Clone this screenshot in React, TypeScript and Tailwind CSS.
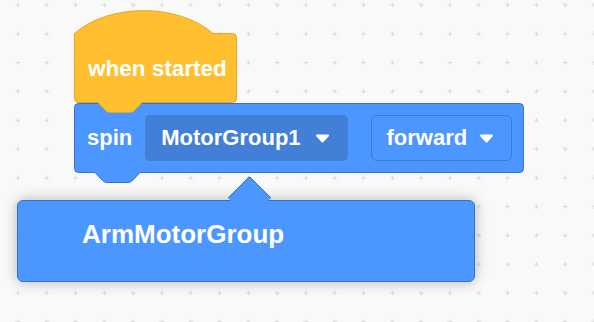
import React from "react";

function Caret() {
  return (
    <svg width="15" height="9" viewBox="0 0 15 9" className="shrink-0">
      <path d="M2 1.5 H13 L7.5 7.5 Z" fill="#fff" stroke="#fff" strokeWidth="2" strokeLinejoin="round" />
    </svg>
  );
}

export default function App() {
  const font = { fontFamily: '"Liberation Sans", Arial, Helvetica, sans-serif' };
  return (
    <div className="relative w-[594px] h-[322px] overflow-hidden bg-[#f9f9f9]" style={font}>
      {/* workspace grid */}
      <svg className="absolute inset-0" width="594" height="322">
        <defs>
          <pattern id="grid" x="3.6" y="-9.4" width="28.8" height="28.8" patternUnits="userSpaceOnUse">
            <path d="M12.2 14.4 H16.6 M14.4 12.2 V16.6" stroke="#d8d8d8" strokeWidth="1" />
          </pattern>
        </defs>
        <rect width="594" height="322" fill="url(#grid)" />
      </svg>

      {/* spin block */}
      <div className="absolute left-[74px] top-[103px] w-[450px] h-[70px]">
        <svg className="absolute left-0 top-0 overflow-visible" width="450" height="81">
          <path
            d="M0.5,4.5 Q0.5,0.5 4.5,0.5 L445.5,0.5 Q449.5,0.5 449.5,4.5 L449.5,65.5 Q449.5,69.5 445.5,69.5 L66,69.5 L58.5,77.5 Q56.5,79.5 54,79.5 L33,79.5 Q30.5,79.5 28.5,77.5 L21,69.5 L4.5,69.5 Q0.5,69.5 0.5,65.5 Z"
            fill="#4c97ff"
            stroke="#3373cc"
            strokeWidth="1"
          />
        </svg>
        <div className="relative flex items-center h-full pl-[13px] pr-[12px] pb-[1px] text-white font-bold text-[22px] leading-[26px]">
          <span>spin</span>
          <div className="ml-[13px] flex items-center h-[46px] w-[203px] rounded-[5px] bg-[#4280d7] pl-[16px]">
            <span>MotorGroup1</span>
            <span className="ml-[14px] mt-[1px]"><Caret /></span>
          </div>
          <div className="ml-[23px] flex items-center h-[46px] w-[142px] rounded-[6px] border border-[#3d7ad0] bg-[#4c97ff] pl-[15px]">
            <span>forward</span>
            <span className="ml-[12px] mt-[1px]"><Caret /></span>
          </div>
        </div>
      </div>

      {/* hat block */}
      <div className="absolute left-[74px] top-[10px] w-[163px] h-[93px]">
        <svg className="absolute left-0 top-0 overflow-visible" width="163" height="104">
          <path
            d="M0.5,23.5 C35,-7 104,-7 139,23.5 L158.5,23.5 Q162.5,23.5 162.5,27.5 L162.5,88.5 Q162.5,92.5 158.5,92.5 L68,92.5 L60.5,100.5 Q58.5,102.5 56,102.5 L36,102.5 Q33.5,102.5 31.5,100.5 L24,92.5 L4.5,92.5 Q0.5,92.5 0.5,88.5 Z"
            fill="#ffbf2f"
            stroke="#e0a52a"
            strokeWidth="1"
          />
        </svg>
        <div className="relative pt-[46px] pl-[14px] text-white font-bold text-[22.5px] leading-[26px] whitespace-nowrap">
          when started
        </div>
      </div>

      {/* dropdown popup */}
      <div className="absolute left-[17px] top-[200px] w-[458px] h-[82px] rounded-[6px] border border-[#3373cc] bg-[#4c97ff] shadow-[0_0_14px_rgba(0,0,0,0.28)]">
        <div className="absolute left-[216px] top-[-19px] w-[31px] h-[31px] rotate-45 rounded-tl-[3px] border-l border-t border-[#3373cc] bg-[#4c97ff]" />
        <div className="relative pl-[64px] pt-[18px] text-white font-bold text-[26px] leading-[30px] whitespace-nowrap">
          ArmMotorGroup
        </div>
      </div>
    </div>
  );
}
